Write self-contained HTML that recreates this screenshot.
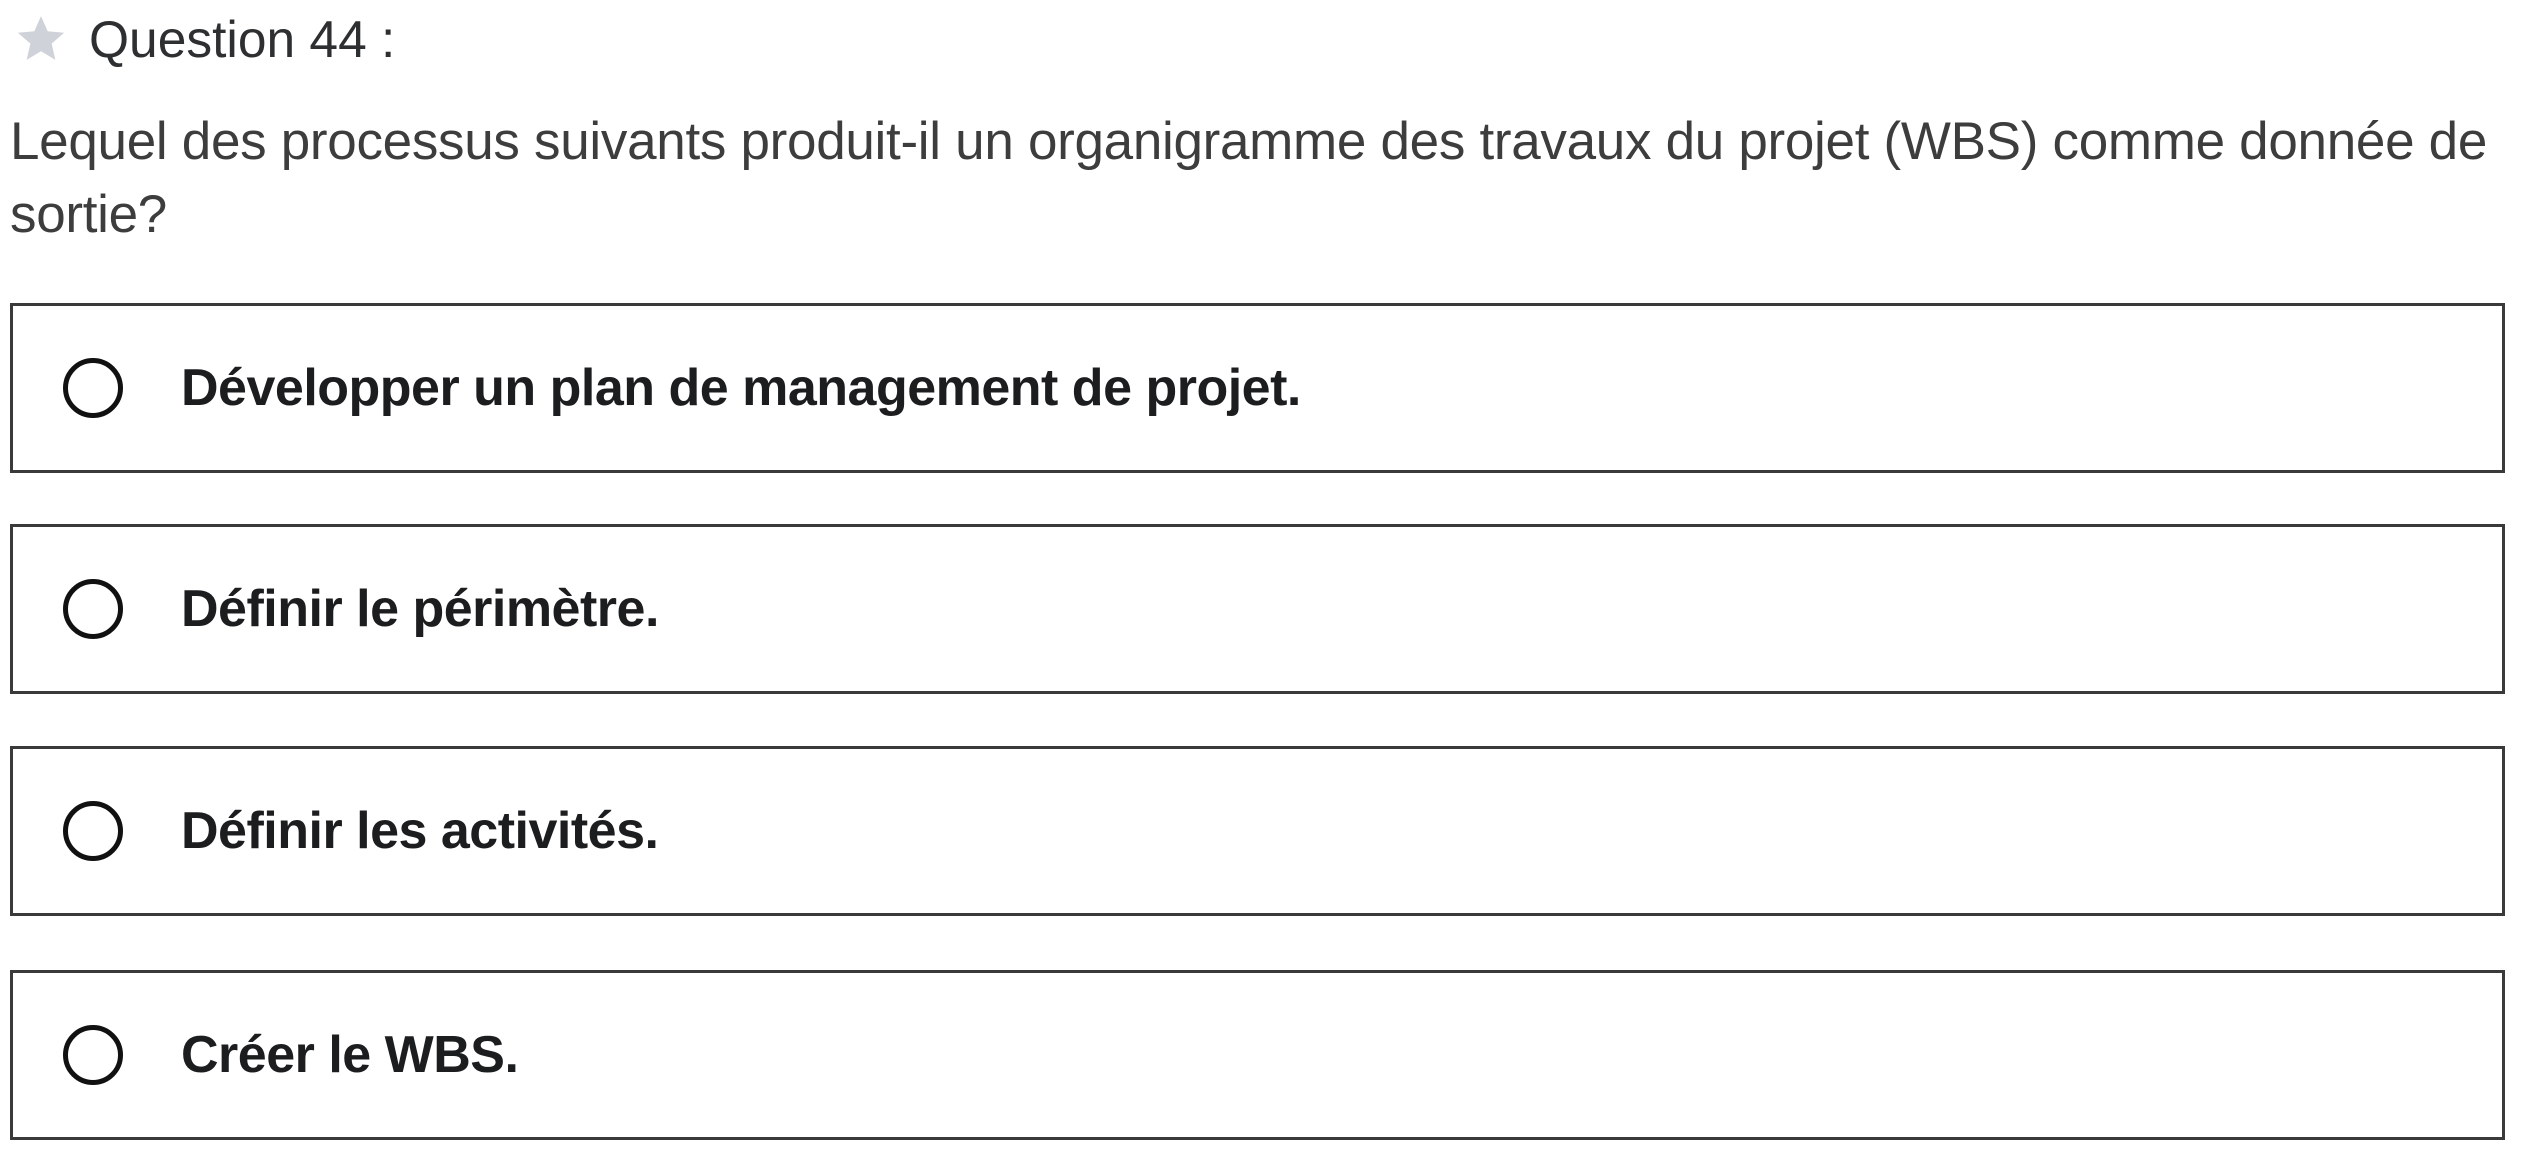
<!DOCTYPE html>
<html><head><meta charset="utf-8"><style>
html,body{margin:0;padding:0;background:#fff;width:2527px;height:1162px;overflow:hidden;font-family:"Liberation Sans",sans-serif;}
.star{position:absolute;left:16px;top:15px;}
.qn{position:absolute;left:89px;top:9px;font-size:51.5px;color:#2d2f31;line-height:60px;white-space:nowrap;}
.qt{position:absolute;left:10px;top:105px;font-size:53px;color:#3d3d3d;line-height:73px;white-space:nowrap;letter-spacing:-0.3px;}
.box{position:absolute;left:10px;width:2489px;height:164px;border:3px solid #3a3a3a;background:#fff;}
.radio{position:absolute;left:50px;top:52px;border:5px solid #111;border-radius:50%;box-sizing:border-box;width:60px;height:60px;}
.lbl{position:absolute;left:168px;top:0;line-height:164px;font-size:52px;font-weight:bold;color:#1c1d1f;white-space:nowrap;letter-spacing:-0.5px;}
</style></head><body>
<svg class="star" width="50" height="48" viewBox="0 0 24 23"><path d="M12 0.5l3.2 7.3 7.9 0.7-6 5.2 1.8 7.8L12 17.4 5.1 21.5l1.8-7.8-6-5.2 7.9-0.7z" fill="#cfd2d8"/></svg>
<div class="qn">Question 44 :</div>
<div class="qt">Lequel des processus suivants produit-il un organigramme des travaux du projet (WBS) comme donnée de<br>sortie?</div>
<div class="box" style="top:303px"><div class="radio"></div><div class="lbl">Développer un plan de management de projet.</div></div>
<div class="box" style="top:524px"><div class="radio"></div><div class="lbl">Définir le périmètre.</div></div>
<div class="box" style="top:746px"><div class="radio"></div><div class="lbl">Définir les activités.</div></div>
<div class="box" style="top:970px"><div class="radio"></div><div class="lbl">Créer le WBS.</div></div>
</body></html>
